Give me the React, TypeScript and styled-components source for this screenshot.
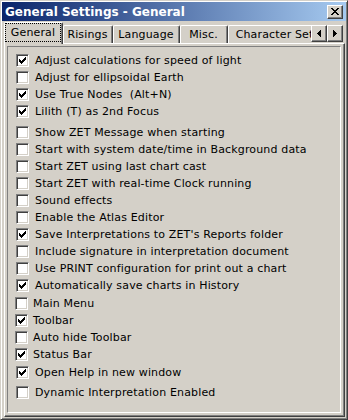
import styled, { createGlobalStyle } from "styled-components"

interface IOption {
  label: string
  checked: boolean
  gap?: number
  shift?: number
}

const options: IOption[] = [
  { label: "Adjust calculations for speed of light", checked: true },
  { label: "Adjust for ellipsoidal Earth", checked: false },
  { label: "Use True Nodes  (Alt+N)", checked: true },
  { label: "Lilith (T) as 2nd Focus", checked: true },
  { label: "Show ZET Message when starting", checked: false, gap: 4 },
  { label: "Start with system date/time in Background data", checked: false },
  { label: "Start ZET using last chart cast", checked: false },
  { label: "Start ZET with real-time Clock running", checked: false },
  { label: "Sound effects", checked: false },
  { label: "Enable the Atlas Editor", checked: false },
  { label: "Save Interpretations to ZET's Reports folder", checked: true },
  { label: "Include signature in interpretation document", checked: false },
  { label: "Use PRINT configuration for print out a chart", checked: false },
  { label: "Automatically save charts in History", checked: true },
  { label: "Main Menu", checked: false, gap: 1, shift: -1 },
  { label: "Toolbar", checked: true, shift: -1 },
  { label: "Auto hide Toolbar", checked: false, shift: -1 },
  { label: "Status Bar", checked: true, shift: -1 },
  { label: "Open Help in new window", checked: true, gap: 1 },
  { label: "Dynamic Interpretation Enabled", checked: false, gap: 3 },
]

const tabs = [
  { label: "General", width: 59 },
  { label: "Risings", width: 50 },
  { label: "Language", width: 67 },
  { label: "Misc.", width: 48 },
  { label: "Character Sets", width: 100 },
]

const face = "#d4d0c8"

// Styles
const GlobalStyle = createGlobalStyle`
  html, body { margin: 0; padding: 0; background: ${face}; }
  body { font-family: "DejaVu Sans", "Liberation Sans", sans-serif; }
`
const Window = styled.div`
  background: ${face};
  border: 1px solid;
  border-color: ${face} #404040 #404040 ${face};
  box-shadow: inset 1px 1px #fff, inset -1px -1px #808080;
  box-sizing: border-box;
  display: flex;
  flex-direction: column;
  height: 420px;
  padding: 1px;
  width: 348px;
`
const TitleBar = styled.div`
  align-items: center;
  background: linear-gradient(to right, #0a246a, #a6caf0);
  display: flex;
  flex: 0 0 19px;
  padding: 0 3px 0 3px;
`
const Title = styled.div`
  color: #fff;
  flex: 1;
  font-size: 12px;
  font-weight: bold;
  white-space: nowrap;
`
const Button3D = styled.div`
  align-items: center;
  background: ${face};
  border: 1px solid;
  border-color: #fff #404040 #404040 #fff;
  box-shadow: inset -1px -1px #808080;
  box-sizing: border-box;
  display: flex;
  justify-content: center;
`
const CloseButton = styled(Button3D)`
  height: 14px;
  width: 16px;
  svg { margin: 0 1px 1px 0; }
`
const Body = styled.div`
  display: flex;
  flex: 1;
  flex-direction: column;
  padding: 0 1px 1px 2px;
`
const TabStrip = styled.div`
  display: flex;
  flex: 0 0 23px;
  margin-bottom: -1px;
  position: relative;
  z-index: 1;
`
const Tabs = styled.div`
  align-items: flex-start;
  display: flex;
  flex: 0 0 307px;
  overflow: hidden;
`
const Tab = styled.div<{ $active: boolean; $width: number }>`
  align-items: stretch;
  background: ${face};
  border: 1px solid;
  border-bottom: 0;
  border-color: #fff #404040 #404040 #fff;
  border-radius: 2px 2px 0 0;
  box-shadow: inset -1px 0 #808080;
  box-sizing: border-box;
  display: flex;
  flex: 0 0 ${p => p.$width}px;
  font-size: 11px;
  height: ${p => (p.$active ? 22 : 18)}px;
  letter-spacing: 0.15px;
  margin-top: ${p => (p.$active ? 1 : 4)}px;
  white-space: nowrap;
`
const TabLabel = styled.div<{ $focus: boolean }>`
  align-items: center;
  border: 1px dotted ${p => (p.$focus ? "#000" : "transparent")};
  display: flex;
  flex: 1;
  justify-content: center;
  margin: 0 1px ${p => (p.$focus ? 2 : 0)}px 0;
  overflow: hidden;
`
const Scroller = styled.div`
  display: flex;
  margin-top: 4px;
`
const ScrollButton = styled(Button3D)`
  height: 17px;
  width: 16px;
`
const Panel = styled.div`
  background: ${face};
  border: 1px solid;
  border-color: #fff #404040 #404040 #fff;
  box-shadow: inset -1px -1px #808080;
  display: flex;
  flex: 1;
  padding: 2px 3px 3px 2px;
`
const Inner = styled.div`
  border: 1px solid;
  border-color: #808080 #fff #fff #808080;
  flex: 1;
  padding: 5px 0 0 8px;
`
const Row = styled.label<{ $gap: number; $shift: number }>`
  align-items: center;
  color: #000;
  display: flex;
  font-size: 11px;
  gap: ${p => 6 + p.$shift}px;
  height: 17px;
  letter-spacing: 0.15px;
  margin: ${p => p.$gap}px 0 0 ${p => p.$shift}px;
  white-space: pre;
`
const Box = styled.span`
  background: #fff;
  border: 1px solid;
  border-color: #808080 #fff #fff #808080;
  box-shadow: inset 1px 1px #404040, inset -1px -1px ${face};
  box-sizing: border-box;
  display: block;
  flex: 0 0 13px;
  height: 13px;
  position: relative;
  svg { left: 2px; position: absolute; top: 2px; }
`

const CheckMark = () => (
  <svg width="7" height="7" viewBox="0 0 7 7" shapeRendering="crispEdges">
    <path d="M0 2h1v3H0zM1 3h1v3H1zM2 4h1v3H2zM3 3h1v3H3zM4 2h1v3H4zM5 1h1v3H5zM6 0h1v3H6z" fill="#000" />
  </svg>
)

const CloseIcon = () => (
  <svg width="8" height="7" viewBox="0 0 8 7" shapeRendering="crispEdges">
    <path d="M0 0h2v1H0zM6 0h2v1H6zM1 1h2v1H1zM5 1h2v1H5zM2 2h4v1H2zM3 3h2v1H3zM2 4h4v1H2zM1 5h2v1H1zM5 5h2v1H5zM0 6h2v1H0zM6 6h2v1H6z" fill="#000" />
  </svg>
)

const Arrow = ({ dir }: { dir: "left" | "right" }) => (
  <svg width="4" height="7" viewBox="0 0 4 7" shapeRendering="crispEdges">
    {dir === "left"
      ? <path d="M0 3h1v1H0zM1 2h1v3H1zM2 1h1v5H2zM3 0h1v7H3z" fill="#000" />
      : <path d="M0 0h1v7H0zM1 1h1v5H1zM2 2h1v3H2zM3 3h1v1H3z" fill="#000" />}
  </svg>
)

const App = () => (
  <>
    <GlobalStyle />
    <Window>
      <TitleBar>
        <Title>General Settings - General</Title>
        <CloseButton><CloseIcon /></CloseButton>
      </TitleBar>
      <Body>
        <TabStrip>
          <Tabs>
            {tabs.map((t, i) => (
              <Tab key={t.label} $active={i === 0} $width={t.width}>
                <TabLabel $focus={i === 0}>{t.label}</TabLabel>
              </Tab>
            ))}
          </Tabs>
          <Scroller>
            <ScrollButton><Arrow dir="left" /></ScrollButton>
            <ScrollButton><Arrow dir="right" /></ScrollButton>
          </Scroller>
        </TabStrip>
        <Panel>
          <Inner>
            {options.map(o => (
              <Row key={o.label} $gap={o.gap ?? 0} $shift={o.shift ?? 0}>
                <Box>{o.checked && <CheckMark />}</Box>
                {o.label}
              </Row>
            ))}
          </Inner>
        </Panel>
      </Body>
    </Window>
  </>
)

export default App
